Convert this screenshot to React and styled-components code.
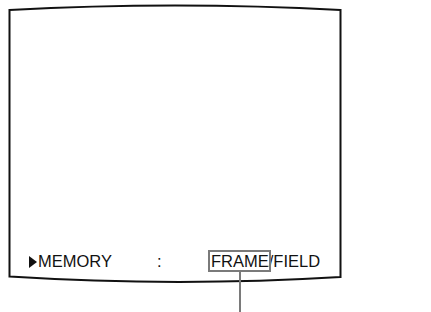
import React from "react";
import styled, { createGlobalStyle } from "styled-components";

const Global = createGlobalStyle`
  html, body { margin: 0; padding: 0; background: #fff; }
  body { width: 431px; height: 312px; overflow: hidden; font-family: "Liberation Sans", Arial, sans-serif; }
`;

const Page = styled.div`
  width: 431px;
  height: 312px;
  padding: 5px 0 0 8px;
  box-sizing: border-box;
`;

const Screen = styled.div`
  position: relative;
  width: 334px;
  height: 280px;
  display: flex;
  flex-direction: column;
  justify-content: flex-end;
  padding: 0 0 14px 21px;
  box-sizing: border-box;
`;

const Outline = styled.svg`
  position: absolute;
  inset: 0;
  width: 100%;
  height: 100%;
  overflow: visible;
  pointer-events: none;
`;

const MenuRow = styled.div`
  position: relative;
  display: flex;
  align-items: center;
  height: 20px;
  font-size: 16.5px;
  line-height: 20px;
  color: #111;
`;

const Cursor = styled.span`
  width: 0;
  height: 0;
  border-left: 8px solid #111;
  border-top: 6px solid transparent;
  border-bottom: 6px solid transparent;
  margin: 1px 1px 0 0;
`;

const Label = styled.span`
  width: 119px;
`;

const Colon = styled.span`
  width: 51px;
`;

const Selected = styled.span`
  position: relative;
  border: 2px solid #7a7a7a;
  padding: 0 0 0 1px;
  margin: -2px -2px -2px 0;
  line-height: 18px;

  &::after {
    content: "";
    position: absolute;
    left: 29px;
    top: 100%;
    width: 2px;
    height: 50px;
    background: #7a7a7a;
    margin-top: 2px;
  }
`;

export default function App() {
  return (
    <>
      <Global />
      <Page>
        <Screen>
          <Outline viewBox="0 0 334 280">
            <path
              d="M1.5 5 Q167 -4 332.5 5 L332.5 272 Q167 282 1.5 271.5 Z"
              fill="none"
              stroke="#111"
              strokeWidth="2"
              strokeLinejoin="miter"
            />
          </Outline>
          <MenuRow>
            <Cursor />
            <Label>MEMORY</Label>
            <Colon>:</Colon>
            <Selected>FRAME</Selected>
            <span>/FIELD</span>
          </MenuRow>
        </Screen>
      </Page>
    </>
  );
}
